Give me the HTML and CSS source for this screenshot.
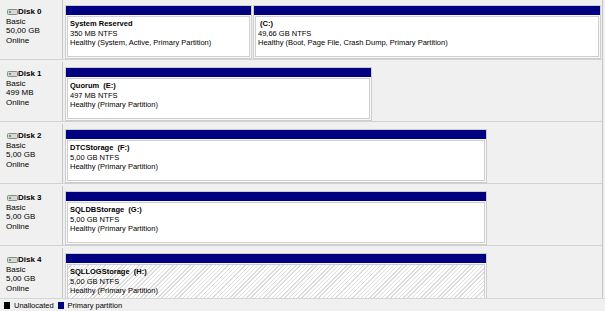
FILE: index.html
```html
<!DOCTYPE html>
<html lang="en">
<head>
    <meta charset="UTF-8">
    <title>Disk Management</title>
    <link rel="stylesheet" href="styles.css">
</head>
<body>
    <div class="view">
        <div class="disks">
            <div class="disk">
                <div class="disk-label">
                    <div class="disk-name"><svg class="disk-icon" width="11" height="6" viewBox="0 0 11 6"><rect x="0.5" y="0.5" width="10" height="5" rx="1" fill="#d8d8d8" stroke="#8a8a8a"/><rect x="2" y="2" width="2" height="2" fill="#4caf50"/></svg>Disk 0</div>
                    <div>Basic</div>
                    <div>50,00 GB</div>
                    <div>Online</div>
                </div>
                <div class="parts">
                    <div class="part" style="width: 187px">
                        <div class="bar"></div>
                        <div class="body">
                            <div class="part-name">System Reserved</div>
                            <div>350 MB NTFS</div>
                            <div>Healthy (System, Active, Primary Partition)</div>
                        </div>
                    </div>
                    <div class="part" style="width: 348px">
                        <div class="bar"></div>
                        <div class="body">
                            <div class="part-name"> (C:)</div>
                            <div>49,66 GB NTFS</div>
                            <div>Healthy (Boot, Page File, Crash Dump, Primary Partition)</div>
                        </div>
                    </div>
                </div>
            </div>

            <div class="disk">
                <div class="disk-label">
                    <div class="disk-name"><svg class="disk-icon" width="11" height="6" viewBox="0 0 11 6"><rect x="0.5" y="0.5" width="10" height="5" rx="1" fill="#d8d8d8" stroke="#8a8a8a"/><rect x="2" y="2" width="2" height="2" fill="#4caf50"/></svg>Disk 1</div>
                    <div>Basic</div>
                    <div>499 MB</div>
                    <div>Online</div>
                </div>
                <div class="parts">
                    <div class="part" style="width: 307px">
                        <div class="bar"></div>
                        <div class="body">
                            <div class="part-name">Quorum  (E:)</div>
                            <div>497 MB NTFS</div>
                            <div>Healthy (Primary Partition)</div>
                        </div>
                    </div>
                </div>
            </div>

            <div class="disk">
                <div class="disk-label">
                    <div class="disk-name"><svg class="disk-icon" width="11" height="6" viewBox="0 0 11 6"><rect x="0.5" y="0.5" width="10" height="5" rx="1" fill="#d8d8d8" stroke="#8a8a8a"/><rect x="2" y="2" width="2" height="2" fill="#4caf50"/></svg>Disk 2</div>
                    <div>Basic</div>
                    <div>5,00 GB</div>
                    <div>Online</div>
                </div>
                <div class="parts">
                    <div class="part" style="width: 422px">
                        <div class="bar"></div>
                        <div class="body">
                            <div class="part-name">DTCStorage  (F:)</div>
                            <div>5,00 GB NTFS</div>
                            <div>Healthy (Primary Partition)</div>
                        </div>
                    </div>
                </div>
            </div>

            <div class="disk">
                <div class="disk-label">
                    <div class="disk-name"><svg class="disk-icon" width="11" height="6" viewBox="0 0 11 6"><rect x="0.5" y="0.5" width="10" height="5" rx="1" fill="#d8d8d8" stroke="#8a8a8a"/><rect x="2" y="2" width="2" height="2" fill="#4caf50"/></svg>Disk 3</div>
                    <div>Basic</div>
                    <div>5,00 GB</div>
                    <div>Online</div>
                </div>
                <div class="parts">
                    <div class="part" style="width: 422px">
                        <div class="bar"></div>
                        <div class="body">
                            <div class="part-name">SQLDBStorage  (G:)</div>
                            <div>5,00 GB NTFS</div>
                            <div>Healthy (Primary Partition)</div>
                        </div>
                    </div>
                </div>
            </div>

            <div class="disk">
                <div class="disk-label">
                    <div class="disk-name"><svg class="disk-icon" width="11" height="6" viewBox="0 0 11 6"><rect x="0.5" y="0.5" width="10" height="5" rx="1" fill="#d8d8d8" stroke="#8a8a8a"/><rect x="2" y="2" width="2" height="2" fill="#4caf50"/></svg>Disk 4</div>
                    <div>Basic</div>
                    <div>5,00 GB</div>
                    <div>Online</div>
                </div>
                <div class="parts">
                    <div class="part" style="width: 422px">
                        <div class="bar"></div>
                        <div class="body hatched">
                            <div class="part-name">SQLLOGStorage  (H:)</div>
                            <div>5,00 GB NTFS</div>
                            <div>Healthy (Primary Partition)</div>
                        </div>
                    </div>
                </div>
            </div>
        </div>

        <div class="legend">
            <span class="swatch swatch-black"></span>
            <span>Unallocated</span>
            <span class="swatch swatch-blue"></span>
            <span>Primary partition</span>
        </div>
    </div>
</body>
</html>
```

FILE: styles.css
```css
* {
    margin: 0;
    padding: 0;
    box-sizing: border-box;
}

body {
    font-family: "Liberation Sans", Arial, sans-serif;
    font-size: 7.5px;
    color: #000;
    background: #f0f0f0;
    width: 605px;
    height: 311px;
    overflow: hidden;
}

.view {
    display: flex;
    flex-direction: column;
    height: 100%;
}

.disks {
    flex: 1;
    overflow: hidden;
    border-right: 1px solid #c4c4c4;
    margin-right: 2px;
}

/* One row per disk */
.disk {
    display: flex;
    height: 60px;
    border-bottom: 1px solid #d2d2d2;
    margin-bottom: 2px;
}

.disk-label {
    width: 63px;
    flex-shrink: 0;
    padding: 7px 0 0 6px;
    line-height: 9.5px;
    font-size: 8px;
    border-right: 1px solid #c6c6c6;
    background: #f0f0f0;
}

.disk-name {
    display: flex;
    align-items: center;
    font-weight: bold;
    margin-left: 1px;
}

.parts {
    display: flex;
    gap: 1px;
    padding: 5px 0 0 2px;
}

.part {
    display: flex;
    flex-direction: column;
    height: 54px;
    border: 1px solid #cdcdcd;
    background: #f7f7f7;
}

.bar {
    height: 9px;
    background: #000080;
    flex-shrink: 0;
}

.body {
    flex: 1;
    margin: 1px;
    border: 1px solid #cfcfcf;
    background: #fff;
    padding: 2px 2px 0;
    line-height: 9.5px;
    white-space: nowrap;
    overflow: hidden;
}

.part-name {
    font-weight: bold;
    white-space: pre;
}

.hatched {
    background: repeating-linear-gradient(135deg, #ffffff 0 2px, #dcdcdc 2px 3px);
}

/* Legend strip */
.legend {
    height: 13px;
    flex-shrink: 0;
    display: flex;
    align-items: center;
    padding-left: 4px;
    border-top: 1px solid #d6d6d6;
    background: #f0f0f0;
}

.swatch {
    width: 6px;
    height: 7px;
    margin-right: 4px;
}

.swatch-black {
    background: #000;
}

.swatch-blue {
    background: #000080;
    margin-left: 4px;
}
```
